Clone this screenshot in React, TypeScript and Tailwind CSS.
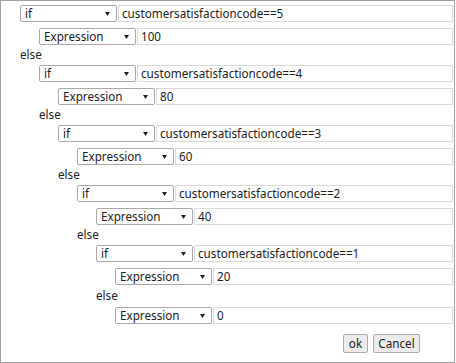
import React from "react";

const font = { fontFamily: '"Noto Sans", "Open Sans", sans-serif' };

function Select({ label }: { label: string }) {
  return (
    <div className="relative flex h-[17px] w-[97px] shrink-0 items-center rounded-[2px] border border-[#a9a9a9] bg-white pl-[4px] text-[11.7px] leading-none text-[#222]">
      <span>{label}</span>
      <svg className="absolute right-[6px] top-[6px]" width="5" height="4" viewBox="0 0 5 4">
        <path d="M0 0 H5 L2.5 4 Z" fill="#222" />
      </svg>
    </div>
  );
}

function Row({ sel, value }: { sel: string; value: string }) {
  return (
    <div className="flex h-[17px] items-center gap-[1px]">
      <Select label={sel} />
      <div className="flex h-[17px] flex-1 items-center border border-[#dadada] bg-white pl-[3px] text-[11.7px] leading-none text-[#222]">
        {value}
      </div>
    </div>
  );
}

const conds = [
  { n: 5, v: "100" },
  { n: 4, v: "80" },
  { n: 3, v: "60" },
  { n: 2, v: "40" },
  { n: 1, v: "20" },
];

function Block({ i }: { i: number }) {
  const c = conds[i];
  const last = i + 1 >= conds.length;
  return (
    <div className="flex flex-col">
      <Row sel="if" value={`customersatisfactioncode==${c.n}`} />
      <div className="mt-[6px] pl-[19px]">
        <Row sel="Expression" value={c.v} />
      </div>
      <div
        className={`flex items-center text-[11.7px] leading-none text-[#222] ${last ? "h-[22px]" : "h-[20px]"}`}
      >
        else
      </div>
      <div className="pl-[19px]">
        {!last ? <Block i={i + 1} /> : <Row sel="Expression" value="0" />}
      </div>
    </div>
  );
}

export default function App() {
  return (
    <div className="h-[363px] w-[455px] bg-white" style={font}>
      <div className="flex h-full w-full flex-col border border-[#a0a0a0] pl-[19px] pr-[1px] pt-[4px]">
        <Block i={0} />
        <div className="mt-[10px] flex justify-end gap-[5px] pr-[33px]">
          <button className="flex h-[19px] w-[25px] items-center justify-center rounded-[2px] border border-[#adadad] bg-[#ececec] text-[11.7px] leading-none text-[#222]">
            ok
          </button>
          <button className="flex h-[19px] w-[47px] items-center justify-center rounded-[2px] border border-[#adadad] bg-[#ececec] text-[11.7px] leading-none text-[#222]">
            Cancel
          </button>
        </div>
      </div>
    </div>
  );
}
